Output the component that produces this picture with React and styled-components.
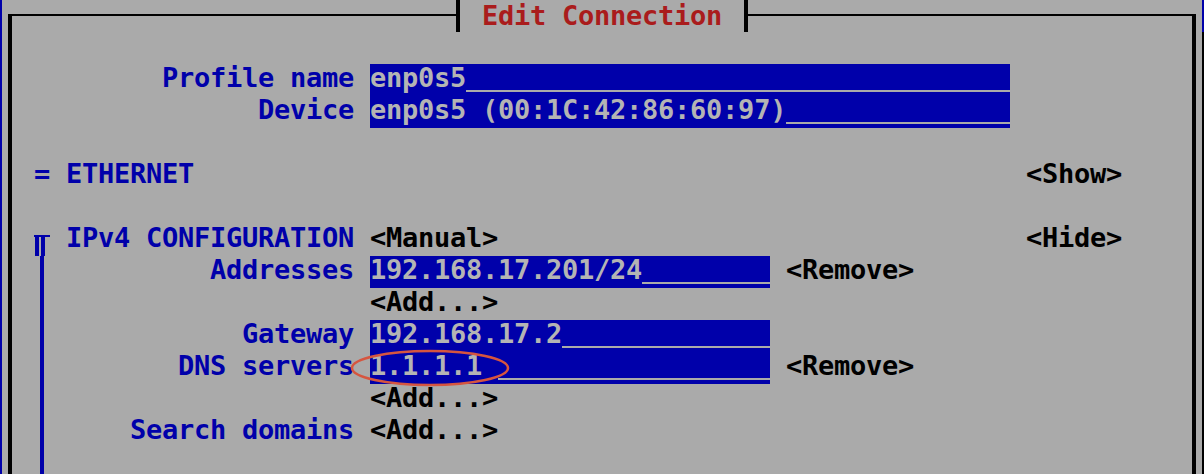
import React from "react";
import styled, { createGlobalStyle } from "styled-components";

const GlobalStyle = createGlobalStyle`
    html, body {
        margin: 0;
        padding: 0;
        background: #0000aa;
    }
    body {
        font-family: "DejaVu Sans Mono", "Liberation Mono", monospace;
        font-weight: bold;
        font-size: 27px;
        letter-spacing: -0.25px;
    }
`;

function Rail({ cap }) {
    if (cap) {
        return (
            <svg width="16" height="32" viewBox="0 0 16 32">
                <rect x="0" y="11" width="16" height="2" fill="#0000aa" />
                <rect x="1" y="13" width="4" height="19" fill="#0000aa" />
                <rect x="7" y="13" width="4" height="19" fill="#0000aa" />
            </svg>
        );
    }
    return <RailLine />;
}

function App() {
    return (
        <>
            <GlobalStyle />
            <Screen>
                <Window>
                    <Frame>
                        <Title>Edit Connection</Title>
                        <Row />
                        <Row>
                            <Label>Profile name</Label>
                            <Field wide>
                                <Value>enp0s5</Value>
                                <Fill />
                            </Field>
                        </Row>
                        <Row>
                            <Label>Device</Label>
                            <Field wide>
                                <Value>enp0s5 (00:1C:42:86:60:97)</Value>
                                <Fill />
                            </Field>
                        </Row>
                        <Row />
                        <Row>
                            <Gutter>=</Gutter>
                            <Heading>ETHERNET</Heading>
                            <Button col={5}>&lt;Show&gt;</Button>
                        </Row>
                        <Row />
                        <Row>
                            <Gutter>
                                <Rail cap />
                            </Gutter>
                            <Heading>IPv4 CONFIGURATION</Heading>
                            <Button col={3}>&lt;Manual&gt;</Button>
                            <Button col={5}>&lt;Hide&gt;</Button>
                        </Row>
                        <Row>
                            <Gutter>
                                <Rail />
                            </Gutter>
                            <Label>Addresses</Label>
                            <Field>
                                <Value>192.168.17.201/24</Value>
                                <Fill />
                            </Field>
                            <Button col={4}>&lt;Remove&gt;</Button>
                        </Row>
                        <Row>
                            <Gutter>
                                <Rail />
                            </Gutter>
                            <Button col={3}>&lt;Add...&gt;</Button>
                        </Row>
                        <Row>
                            <Gutter>
                                <Rail />
                            </Gutter>
                            <Label>Gateway</Label>
                            <Field>
                                <Value>192.168.17.2</Value>
                                <Fill />
                            </Field>
                        </Row>
                        <Row>
                            <Gutter>
                                <Rail />
                            </Gutter>
                            <Label>DNS servers</Label>
                            <Field>
                                <Value>1.1.1.1</Value>
                                <Fill cursor />
                                <Circle viewBox="0 0 160 38">
                                    <ellipse
                                        cx="80"
                                        cy="19"
                                        rx="78"
                                        ry="17"
                                        fill="none"
                                        stroke="#d6553f"
                                        strokeWidth="2.5"
                                    />
                                </Circle>
                            </Field>
                            <Button col={4}>&lt;Remove&gt;</Button>
                        </Row>
                        <Row>
                            <Gutter>
                                <Rail />
                            </Gutter>
                            <Button col={3}>&lt;Add...&gt;</Button>
                        </Row>
                        <Row>
                            <Gutter>
                                <Rail />
                            </Gutter>
                            <Label>Search domains</Label>
                            <Button col={3}>&lt;Add...&gt;</Button>
                        </Row>
                        <Row>
                            <Gutter>
                                <Rail />
                            </Gutter>
                        </Row>
                    </Frame>
                </Window>
                <Shadow />
            </Screen>
        </>
    );
}

export default App;

const Screen = styled.div`
    display: flex;
    width: 1204px;
    height: 474px;
    overflow: hidden;
    background: #0000aa;
`;
const Window = styled.div`
    flex: 0 0 1200px;
    box-sizing: border-box;
    margin-left: 2px;
    padding: 14px 6px 0;
    display: flex;
    flex-direction: column;
    background: #aaaaaa;
`;
const Shadow = styled.div`
    flex: 0 0 16px;
    margin-top: 32px;
    background: #000;
`;
const Frame = styled.div`
    flex: 1;
    display: flex;
    flex-direction: column;
    border: 4px solid #000;
    border-top-width: 2px;
    border-bottom: none;
`;
const Title = styled.h1`
    align-self: center;
    box-sizing: border-box;
    height: 32px;
    margin: -16px 0 0;
    padding: 0 22px;
    border-left: 4px solid #000;
    border-right: 4px solid #000;
    background: #aaaaaa;
    color: #aa1c1c;
    font-size: 27px;
    line-height: 31px;
    font-weight: bold;
    white-space: pre;
`;
const Row = styled.div`
    display: grid;
    grid-template-columns: 16px 288px 400px 224px 1fr;
    column-gap: 16px;
    height: 32px;
    padding-left: 22px;
    line-height: 28px;
    white-space: pre;
`;
const Gutter = styled.div`
    grid-column: 1;
    height: 32px;
    color: #0000aa;
`;
const RailLine = styled.div`
    width: 4px;
    height: 32px;
    margin-left: 6px;
    background: #0000aa;
`;
const Label = styled.span`
    grid-column: 2;
    text-align: right;
    color: #0000aa;
`;
const Heading = styled.span`
    grid-column: 2;
    color: #0000aa;
`;
const Button = styled.span`
    grid-column: ${(p) => p.col};
    color: #000;
`;
const Field = styled.div`
    grid-column: ${(p) => (p.wide ? "3 / span 2" : "3")};
    position: relative;
    display: flex;
    align-items: flex-start;
    height: 32px;
    background: #0000aa;
    color: #b4b4b4;
`;
const Value = styled.span`
    flex: none;
`;
const Fill = styled.span`
    flex: 1;
    height: 26px;
    margin-left: ${(p) => (p.cursor ? "16px" : "0")};
    border-bottom: 2px solid #aaaaaa;
`;
const Circle = styled.svg`
    position: absolute;
    left: -20px;
    top: -3px;
    width: 160px;
    height: 38px;
    overflow: visible;
    pointer-events: none;
`;
